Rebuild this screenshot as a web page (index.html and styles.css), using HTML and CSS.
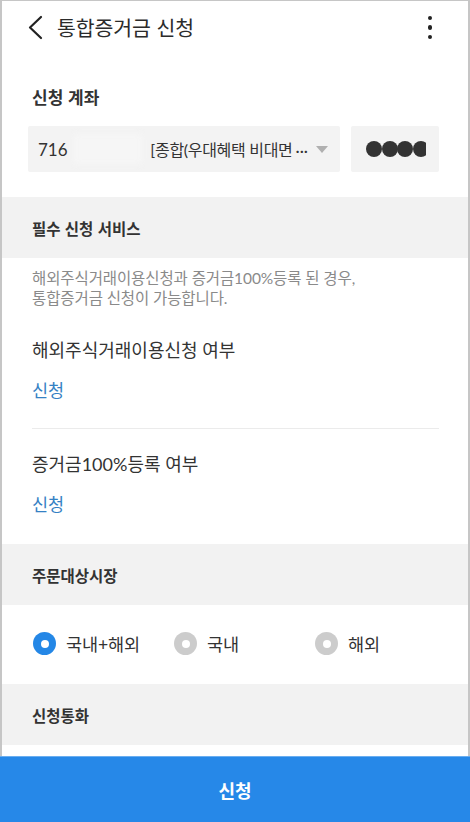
FILE: index.html
```html
<!DOCTYPE html>
<html lang="ko">
<head>
<meta charset="utf-8">
<title>통합증거금 신청</title>
<link rel="stylesheet" href="styles.css">
</head>
<body>
<div class="frame">
  <header class="topbar">
    <svg class="back" width="18" height="26" viewBox="0 0 18 26"><polyline points="14,2 3,12.5 14,23" fill="none" stroke="#222" stroke-width="2.2" stroke-linecap="round" stroke-linejoin="round"/></svg>
    <h1 class="title">통합증거금 신청</h1>
    <div class="kebab"><span></span><span></span><span></span></div>
  </header>

  <section class="account">
    <div class="label">신청 계좌</div>
    <div class="account-row">
      <div class="select">
        <span class="acct-num">716</span>
        <span class="mask"></span>
        <span class="acct-name">[종합(우대혜택 비대면<span class="ell">···</span></span>
        <span class="caret"></span>
      </div>
      <div class="pw">
        <div class="dots"><i></i><i></i><i></i><i></i></div>
      </div>
    </div>
  </section>

  <div class="band">필수 신청 서비스</div>
  <p class="desc">해외주식거래이용신청과 증거금100%등록 된 경우,<br>통합증거금 신청이 가능합니다.</p>
  <div class="item">
    <div class="item-title">해외주식거래이용신청 여부</div>
    <div class="item-link">신청</div>
  </div>
  <div class="item last">
    <div class="item-title">증거금100%등록 여부</div>
    <div class="item-link">신청</div>
  </div>

  <div class="band">주문대상시장</div>
  <div class="radios">
    <label class="opt"><span class="radio on"></span>국내+해외</label>
    <label class="opt"><span class="radio"></span>국내</label>
    <label class="opt"><span class="radio"></span>해외</label>
  </div>

  <div class="band">신청통화</div>
  <div class="spacer"></div>
</div>
<button class="submit">신청</button>
</body>
</html>
```

FILE: styles.css
```css
* { box-sizing: border-box; margin: 0; padding: 0; }
html, body { width: 470px; height: 822px; overflow: hidden; background: #fff; }
body {
  font-family: Lato, "Noto Sans CJK KR", sans-serif;
  color: #333;
}
.frame {
  border-top: 1px solid #c6c6c6;
  border-left: 2px solid #c6c6c6;
  border-right: 2px solid #c6c6c6;
  height: 756px;
  display: flex;
  flex-direction: column;
}
.topbar {
  height: 52px;
  display: flex;
  align-items: center;
  padding-left: 25px;
  padding-right: 36px;
}
.back { display: block; margin-top: 1px; }
.title {
  font-family: "Noto Sans CJK KR", sans-serif;
  font-weight: 400;
  font-size: 20.5px;
  color: #2b2b2b;
  margin-left: 12px;
  flex: 1;
  letter-spacing: -0.1px;
}
.kebab { display: flex; flex-direction: column; gap: 5px; margin-top: 1px; }
.kebab span { width: 4.5px; height: 4.5px; border-radius: 50%; background: #222; }

.account { padding: 32px 29px 25px 26px; }
.label {
  font-family: "Noto Sans CJK KR", sans-serif;
  font-weight: 700;
  font-size: 17px;
  line-height: 24px;
  padding-left: 4px;
  color: #333;
}
.account-row { display: flex; gap: 11px; margin-top: 17px; height: 46px; }
.select {
  width: 312px;
  background: #f3f3f3;
  display: flex;
  align-items: center;
  padding: 0 12px 0 10px;
  border-radius: 2px;
}
.acct-num { font-family: Lato, sans-serif; font-size: 17px; color: #333; }
.mask { flex: 1; height: 30px; margin: 0 8px 0 6px; background: #f6f6f6; filter: blur(3px); }
.acct-name {
  font-family: Lato, "Noto Sans CJK KR", sans-serif;
  font-size: 16px;
  color: #333;
  white-space: nowrap;
  letter-spacing: -0.3px;
}
.ell { font-family: Lato, sans-serif; letter-spacing: 0; margin-left: 3px; }
.caret {
  width: 0; height: 0;
  border-left: 6px solid transparent;
  border-right: 6px solid transparent;
  border-top: 7px solid #b0b0b0;
  margin-left: 8px;
}
.pw {
  flex: 1;
  background: #f3f3f3;
  display: flex;
  align-items: center;
  padding-left: 15px;
  border-radius: 2px;
}
.dots { width: 60px; overflow: hidden; display: flex; }
.dots i { flex: none; width: 16px; height: 16px; border-radius: 50%; background: #333; margin-right: -0.5px; }

.band {
  background: #f2f2f2;
  height: 61px;
  display: flex;
  align-items: center;
  padding-left: 30px;
  font-family: "Noto Sans CJK KR", sans-serif;
  font-weight: 700;
  font-size: 15.5px;
  color: #333;
  flex: none;
}
.desc {
  padding: 10px 30px 0;
  font-family: Lato, "Noto Sans CJK KR", sans-serif;
  font-size: 15.5px;
  line-height: 20px;
  color: #8a8a8a;
  letter-spacing: -0.1px;
}
.item {
  margin: 7px 29px 0 30px;
  padding: 23px 0 26px;
  border-bottom: 1px solid #ebebeb;
}
.item.last { margin-top: 0; border-bottom: none; padding-bottom: 28px; }
.item-title {
  font-family: Lato, "Noto Sans CJK KR", sans-serif;
  font-size: 18px;
  line-height: 24px;
  color: #333;
}
.item-link {
  margin-top: 16px;
  font-family: "Noto Sans CJK KR", sans-serif;
  font-size: 17.5px;
  line-height: 24px;
  color: #3481c4;
}
.radios {
  height: 79px;
  display: grid;
  grid-template-columns: 141px 141px 141px;
  align-items: center;
  padding-left: 31px;
  padding-bottom: 2px;
  flex: none;
}
.opt {
  display: flex;
  align-items: center;
  gap: 10px;
  font-family: "Noto Sans CJK KR", sans-serif;
  font-size: 17.5px;
  color: #333;
}
.radio {
  width: 23px; height: 23px; border-radius: 50%;
  background: #cccccc;
  display: flex; align-items: center; justify-content: center;
  flex: none;
}
.radio::after { content: ""; width: 8px; height: 8px; border-radius: 50%; background: #fff; }
.radio.on { background: #2487e6; }
.spacer { flex: 1; }
.submit {
  display: block;
  width: 470px;
  height: 66px;
  border: none;
  border-top: 1px solid #6aaef0;
  background: #2688e8;
  color: #fff;
  font-family: "Noto Sans CJK KR", sans-serif;
  font-weight: 700;
  font-size: 18px;
}
```
